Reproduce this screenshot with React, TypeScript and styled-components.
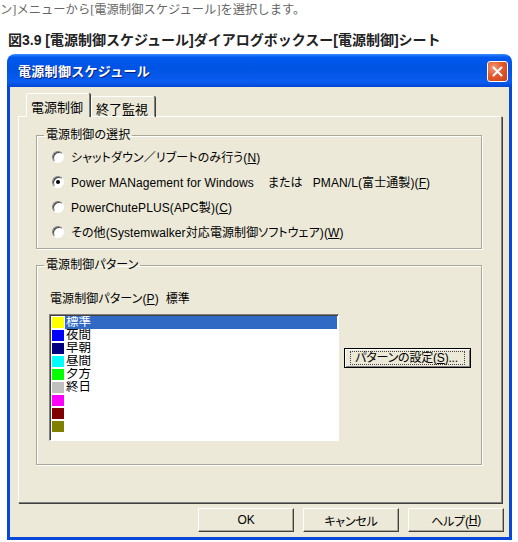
import React, { FC } from "react";
import styled, { createGlobalStyle } from "styled-components";

const GlobalStyle = createGlobalStyle`
  body {
    margin: 0;
    background: #ffffff;
  }
`;

const UI_FONT = `"Liberation Sans", "Noto Sans CJK JP", sans-serif`;

const Page = styled.div`
  width: 518px;
  height: 542px;
  overflow: hidden;
`;

const Intro = styled.div`
  height: 20px;
  line-height: 20px;
  font-family: "Liberation Serif", "Noto Sans CJK JP", serif;
  font-size: 12.3px;
  color: #666;
  white-space: nowrap;
`;

const Caption = styled.div`
  margin: 11px 0 5px 8px;
  height: 18px;
  line-height: 18px;
  font-family: "Liberation Sans", "Noto Sans CJK JP", sans-serif;
  font-size: 14px;
  font-weight: bold;
  color: #222;
  white-space: nowrap;
`;

const Window = styled.div`
  margin-left: 7px;
  width: 505px;
  display: flex;
  flex-direction: column;
`;

const TitleBar = styled.div`
  height: 33px;
  box-sizing: border-box;
  border-radius: 8px 8px 0 0;
  background: linear-gradient(
    to bottom,
    #3a8cff 0%,
    #0058ee 10%,
    #0054e3 45%,
    #0a5cf0 85%,
    #0046d4 100%
  );
  display: flex;
  align-items: center;
  justify-content: space-between;
  padding: 0 4px 0 11px;
`;

const Title = styled.span`
  font-family: ${UI_FONT};
  font-size: 13px;
  font-weight: bold;
  color: #fff;
  letter-spacing: 0.3px;
  text-shadow: 1px 1px 0 #0a1f7a;
`;

const CloseButton = styled.div`
  width: 21px;
  height: 21px;
  box-sizing: border-box;
  border: 1px solid #fff;
  border-radius: 3px;
  background: radial-gradient(circle at 30% 30%, #f29a7c 0%, #e35a2c 45%, #c5401c 100%);
  display: flex;
  align-items: center;
  justify-content: center;
  margin-top: 1px;
`;

const Body = styled.div`
  background: #ece9d8;
  border: 3px solid #0847d8;
  border-top: none;
  display: flex;
  flex-direction: column;
  padding: 6px 7px 5px 8px;
`;

const TabStrip = styled.div`
  display: flex;
  align-items: flex-end;
  height: 24px;
  padding-left: 8px;
  margin-bottom: -1px;
  position: relative;
  z-index: 1;
`;

const Tab = styled.div<{ $active?: boolean }>`
  font-family: ${UI_FONT};
  font-size: 13px;
  color: #000;
  box-sizing: border-box;
  height: ${(p) => (p.$active ? 24 : 21)}px;
  padding: ${(p) => (p.$active ? "3px 6px 0 4px" : "2px 6px 0 4px")};
  background: #ece9d8;
  border-top: 1px solid #fff;
  border-left: 1px solid #fff;
  border-right: 1px solid #808080;
  box-shadow: 1px 0 0 #404040;
  border-radius: 2px 2px 0 0;
  ${(p) => (p.$active ? "" : "margin-left: 1px; border-bottom: 1px solid #fff;")}
`;

const TabPanel = styled.div`
  height: 387px;
  box-sizing: border-box;
  border-top: 1px solid #fff;
  border-left: 1px solid #fff;
  border-right: 1px solid #808080;
  border-bottom: 1px solid #808080;
  box-shadow: 1px 1px 0 #404040;
  padding: 11px 19px 0 17px;
  display: flex;
  flex-direction: column;
  gap: 9px;
`;

const Group = styled.fieldset<{ $h: number }>`
  margin: 0;
  height: ${(p) => p.$h}px;
  box-sizing: border-box;
  border: 1px solid #aca899;
  box-shadow: inset 1px 1px 0 #fff, 1px 1px 0 #fff;
  padding: 2px 0 0 15px;
  font-family: ${UI_FONT};
  font-size: 12px;
  letter-spacing: 0.1px;
  font-feature-settings: "palt";
`;

const Legend = styled.legend`
  padding: 0 2px;
  margin-left: -8px;
  line-height: 14px;
  color: #000;
`;

const RadioRow = styled.label`
  display: flex;
  align-items: center;
  height: 25px;
  gap: 7px;
  color: #000;
  white-space: nowrap;
`;

const RadioDot = styled.span<{ $checked?: boolean }>`
  width: 12px;
  height: 12px;
  box-sizing: border-box;
  border-radius: 50%;
  background: #fff;
  border: 1px solid;
  border-color: #808080 #fff #fff #808080;
  box-shadow: inset 1px 1px 0 #404040;
  display: flex;
  align-items: center;
  justify-content: center;
  flex-shrink: 0;
  &::after {
    content: "";
    width: 4px;
    height: 4px;
    border-radius: 50%;
    background: ${(p) => (p.$checked ? "#000" : "transparent")};
  }
`;

const Gap = styled.span<{ $w: number }>`
  display: inline-block;
  width: ${(p) => p.$w}px;
`;

const PatternLabel = styled.div`
  margin-top: 18px;
  line-height: 14px;
  color: #000;
  white-space: nowrap;
  margin-left: -2px;
`;

const PatternRow = styled.div`
  display: flex;
  align-items: flex-start;
  gap: 5px;
  margin-top: 8px;
  margin-left: -3px;
`;

const ListBox = styled.div`
  width: 290px;
  height: 127px;
  box-sizing: border-box;
  background: #fff;
  border: 1px solid;
  border-color: #808080 #fff #fff #808080;
  box-shadow: inset 1px 1px 0 #404040;
  padding: 1px 1px 0 2px;
  display: flex;
  flex-direction: column;
  letter-spacing: 0;
`;

const ListItem = styled.div`
  display: flex;
  align-items: center;
  height: 13px;
`;

const Swatch = styled.span<{ $color: string }>`
  width: 12px;
  height: 11px;
  margin-right: 1px;
  background: ${(p) => p.$color};
  flex-shrink: 0;
`;

const ItemText = styled.span<{ $selected?: boolean }>`
  flex: 1;
  height: 13px;
  line-height: 13px;
  font-size: 12.5px;
  padding-left: 1px;
  color: ${(p) => (p.$selected ? "#fff" : "#000")};
  background: ${(p) => (p.$selected ? "#316ac5" : "transparent")};
  overflow: hidden;
`;

const Button = styled.div<{ $w: number; $default?: boolean }>`
  width: ${(p) => p.$w}px;
  height: ${(p) => (p.$default ? 20 : 24)}px;
  box-sizing: border-box;
  font-family: ${UI_FONT};
  font-size: 12px;
  letter-spacing: -0.2px;
  font-feature-settings: "palt";
  color: #000;
  background: #ece9d8;
  display: flex;
  align-items: center;
  justify-content: center;
  white-space: nowrap;
  ${(p) =>
    p.$default
      ? `border: 1px solid #000;
         box-shadow: inset 1px 1px 0 #fff, inset -1px -1px 0 #808080;`
      : `border-top: 1px solid #fff;
         border-left: 1px solid #fff;
         border-right: 1px solid #404040;
         border-bottom: 1px solid #404040;
         box-shadow: inset -1px -1px 0 #aca899;`}
`;

const FocusRing = styled.span`
  border: 1px dotted #444;
  padding: 0 6px 0 4px;
  line-height: 12px;
`;

const ButtonBar = styled.div`
  display: flex;
  justify-content: flex-end;
  gap: 9px;
  margin-top: 5px;
  margin-right: -2px;
`;

const CloseGlyph: FC = () => (
  <svg width="13" height="13" viewBox="0 0 13 13">
    <path d="M2.5 2.5 L10.5 10.5 M10.5 2.5 L2.5 10.5" stroke="#fff" strokeWidth="2" strokeLinecap="round" />
  </svg>
);

const patterns: { color: string; label: string }[] = [
  { color: "#ffff00", label: "標準" },
  { color: "#0000ff", label: "夜間" },
  { color: "#000080", label: "早朝" },
  { color: "#00ffff", label: "昼間" },
  { color: "#00ff00", label: "夕方" },
  { color: "#c0c0c0", label: "終日" },
  { color: "#ff00ff", label: "" },
  { color: "#800000", label: "" },
  { color: "#808000", label: "" },
];

const App: FC = () => {
  return (
    <Page>
      <GlobalStyle />
      <Intro>ン]メニューから[電源制御スケジュール]を選択します。</Intro>
      <Caption>図3.9 [電源制御スケジュール]ダイアログボックスー[電源制御]シート</Caption>
      <Window>
        <TitleBar>
          <Title>電源制御スケジュール</Title>
          <CloseButton>
            <CloseGlyph />
          </CloseButton>
        </TitleBar>
        <Body>
          <TabStrip>
            <Tab $active>電源制御</Tab>
            <Tab>終了監視</Tab>
          </TabStrip>
          <TabPanel>
            <Group $h={121}>
              <Legend>電源制御の選択</Legend>
              <RadioRow>
                <RadioDot />
                <span>
                  シャットダウン／リブートのみ行う(<u>N</u>)
                </span>
              </RadioRow>
              <RadioRow>
                <RadioDot $checked />
                <span>
                  Power MANagement for Windows<Gap $w={14} />または<Gap $w={10} />PMAN/L(富士通製)(<u>F</u>)
                </span>
              </RadioRow>
              <RadioRow>
                <RadioDot />
                <span>
                  PowerChutePLUS(APC製)(<u>C</u>)
                </span>
              </RadioRow>
              <RadioRow>
                <RadioDot />
                <span>
                  その他(Systemwalker対応電源制御ソフトウェア)(<u>W</u>)
                </span>
              </RadioRow>
            </Group>
            <Group $h={207}>
              <Legend>電源制御パターン</Legend>
              <PatternLabel>
                電源制御パターン(<u>P</u>)&nbsp;&nbsp;標準
              </PatternLabel>
              <PatternRow>
                <ListBox>
                  {patterns.map((p, i) => (
                    <ListItem key={i}>
                      <Swatch $color={p.color} />
                      <ItemText $selected={i === 0}>{p.label}</ItemText>
                    </ListItem>
                  ))}
                </ListBox>
                <Button $w={127} $default style={{ marginTop: 34 }}>
                  <FocusRing>
                    パターンの設定(<u>S</u>)...
                  </FocusRing>
                </Button>
              </PatternRow>
            </Group>
          </TabPanel>
          <ButtonBar>
            <Button $w={96}>OK</Button>
            <Button $w={96}>キャンセル</Button>
            <Button $w={96}>
              ヘルプ(<u>H</u>)
            </Button>
          </ButtonBar>
        </Body>
      </Window>
    </Page>
  );
};

export default App;
